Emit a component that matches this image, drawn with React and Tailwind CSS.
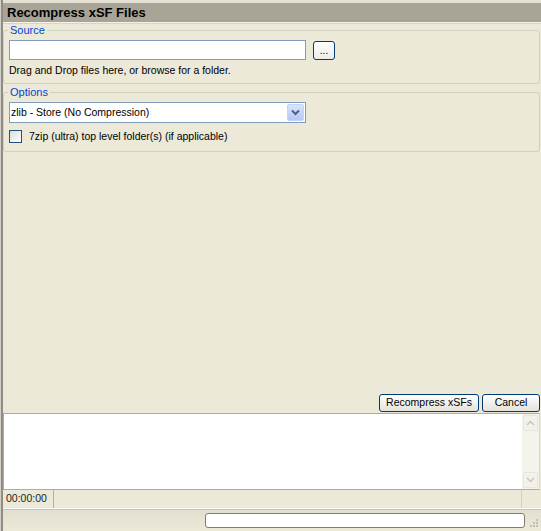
import React from 'react';

function GroupBox({ label, children, className }) {
  return (
    <fieldset className={`border border-[#D0D0BF] rounded-[3px] mx-0 px-[4px] pb-[4px] ${className}`}>
      <legend className="text-[#0046D5] text-[11px] px-[2px] ml-0 leading-[13px]">{label}</legend>
      {children}
    </fieldset>
  );
}

export default function App() {
  return (
    <div className="w-[541px] h-[531px] bg-[#ECE9D8] overflow-hidden text-[10.5px] text-black flex" style={{ fontFamily: '"Liberation Sans", Arial, sans-serif' }}>
      <div className="w-px bg-[#D4D0C8]" />
      <div className="w-[2px] bg-[#8E8C84]" />
      <div className="flex-1 flex flex-col min-w-0">
        {/* title */}
        <div className="h-[3px] bg-[#E4E1D4]" />
        <div className="h-[19px] bg-[#A8A597] flex items-center pl-[4px] font-bold text-[13px] leading-none">
          Recompress xSF Files
        </div>
        <div className="h-px bg-[#F4F2E8]" />
        <div className="h-px bg-[#D8D5C6]" />

        {/* main panel */}
        <div className="flex-1 flex flex-col pr-[1px]">
          <GroupBox label="Source" className="h-[60px]">
            <div className="flex items-center gap-[7px] mt-[3px] ml-px">
              <div className="w-[297px] h-[20px] bg-white border border-[#7F9DB9]" />
              <div className="w-[22px] h-[19px] rounded-[3px] border border-[#003C74] bg-gradient-to-b from-white to-[#ECEBE6] flex items-end justify-center pb-[3px] text-[10px] leading-none">
                ...
              </div>
            </div>
            <div className="mt-[4px] ml-px leading-[13px]">Drag and Drop files here, or browse for a folder.</div>
          </GroupBox>
          <GroupBox label="Options" className="h-[66px] mt-[2px]">
            <div className="mt-[3px] ml-px w-[297px] h-[21px] bg-white border border-[#7F9DB9] flex items-center">
              <span className="flex-1 pl-px">zlib - Store (No Compression)</span>
              <div className="w-[17px] h-[17px] mr-px rounded-[2px] bg-gradient-to-b from-[#D8E4FC] to-[#B4C8F6] border border-[#C3D3FD] flex items-center justify-center">
                <svg width="9" height="7" viewBox="0 0 9 7"><path d="M1 1.5l3.5 3.5 3.5-3.5" stroke="#4D6185" strokeWidth="2" fill="none" /></svg>
              </div>
            </div>
            <div className="flex items-center mt-[6px] ml-px">
              <div className="w-[13px] h-[13px] border border-[#1C5180] bg-gradient-to-br from-[#DCDCD7] to-white" />
              <span className="ml-[7px]">7zip (ultra) top level folder(s) (if applicable)</span>
            </div>
          </GroupBox>
          <div className="flex-1" />
          <div className="flex justify-end gap-[3px] pb-px">
            <div className="w-[100px] h-[18px] rounded-[3px] border border-[#003C74] bg-gradient-to-b from-white to-[#E3E2DB] flex items-center justify-center">Recompress xSFs</div>
            <div className="w-[58px] h-[18px] rounded-[3px] border border-[#003C74] bg-gradient-to-b from-white to-[#E3E2DB] flex items-center justify-center">Cancel</div>
          </div>
        </div>

        {/* log */}
        <div className="h-[77px] shrink-0 bg-white border border-[#A5ACB2] border-r-[#D8D8D0] flex justify-end mr-[1px]">
          <div className="w-[17px] bg-[#F5F4EA] flex flex-col justify-between p-px">
            <div className="h-[16px] rounded-[2px] border border-[#E8E6DC] bg-[#F2F1EA] flex items-center justify-center">
              <svg width="9" height="6" viewBox="0 0 9 6"><path d="M1 5l3.5-3.5L8 5" stroke="#C9C7BA" strokeWidth="1.5" fill="none" /></svg>
            </div>
            <div className="h-[16px] rounded-[2px] border border-[#E8E6DC] bg-[#F2F1EA] flex items-center justify-center">
              <svg width="9" height="6" viewBox="0 0 9 6"><path d="M1 1l3.5 3.5L8 1" stroke="#C9C7BA" strokeWidth="1.5" fill="none" /></svg>
            </div>
          </div>
        </div>

        {/* status row */}
        <div className="h-[19px] shrink-0 flex items-stretch border-b border-[#FFFFFF]">
          <div className="w-[51px] border-r border-[#B5B2A2] flex items-center pl-[3px] text-[#222]">00:00:00</div>
          <div className="flex-1 border-r border-[#D4D0C0] mr-[3px]" />
          <div className="w-[16px]" />
        </div>

        {/* bottom strip */}
        <div className="h-[22px] shrink-0 bg-gradient-to-b from-[#E2DFD0] to-[#ECE9D8] border-t border-[#C8C5B5] flex items-center justify-end pr-[2px]">
          <div className="w-[320px] h-[15px] bg-white border border-[#7F7D72] rounded-[3px] mr-[2px]" />
          <svg width="12" height="12" viewBox="0 0 12 12" className="mt-[6px]">
            <g fill="#C2BFB0">
              <rect x="9" y="1" width="2" height="2" />
              <rect x="6" y="4" width="2" height="2" />
              <rect x="9" y="4" width="2" height="2" />
              <rect x="3" y="7" width="2" height="2" />
              <rect x="6" y="7" width="2" height="2" />
              <rect x="9" y="7" width="2" height="2" />
            </g>
          </svg>
        </div>
      </div>
    </div>
  );
}
